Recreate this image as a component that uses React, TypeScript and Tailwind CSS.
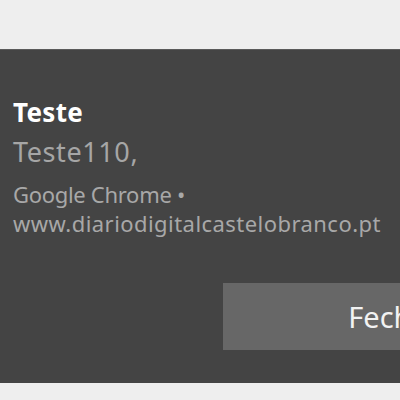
const App = () => {
  return (
    <div className="w-[400px] h-[400px] overflow-hidden bg-[#eeeeee] font-['Noto_Sans',sans-serif]">
      <div className="h-[50px] bg-[#eeeeee] border-b border-[#5a5a5a]" />
      <div className="h-[333px] w-[580px] bg-[#444444] pt-[45px] pl-[13px] flex flex-col">
        <div className="text-[26px] leading-[35px] font-bold text-white tracking-[0.3px]">Teste</div>
        <div className="mt-[4px] text-[27px] leading-[36px] text-[#a6a6a6] tracking-[0.6px]">Teste110,</div>
        <div className="mt-[10px] text-[22px] leading-[29px] text-[#a8a8a8]">
          <div className="tracking-[-0.3px]">Google Chrome •</div>
          <div className="tracking-[0.45px]">www.diariodigitalcastelobranco.pt</div>
        </div>
        <div className="mt-[45px] ml-[210px] w-[342px] h-[67px] bg-[#676767] flex items-center justify-center">
          <span className="text-[29px] leading-none text-[#f2f2f2]">Fechar</span>
        </div>
      </div>
      <div className="h-[17px] bg-[#eeeeee]" />
    </div>
  );
};

export default App;
